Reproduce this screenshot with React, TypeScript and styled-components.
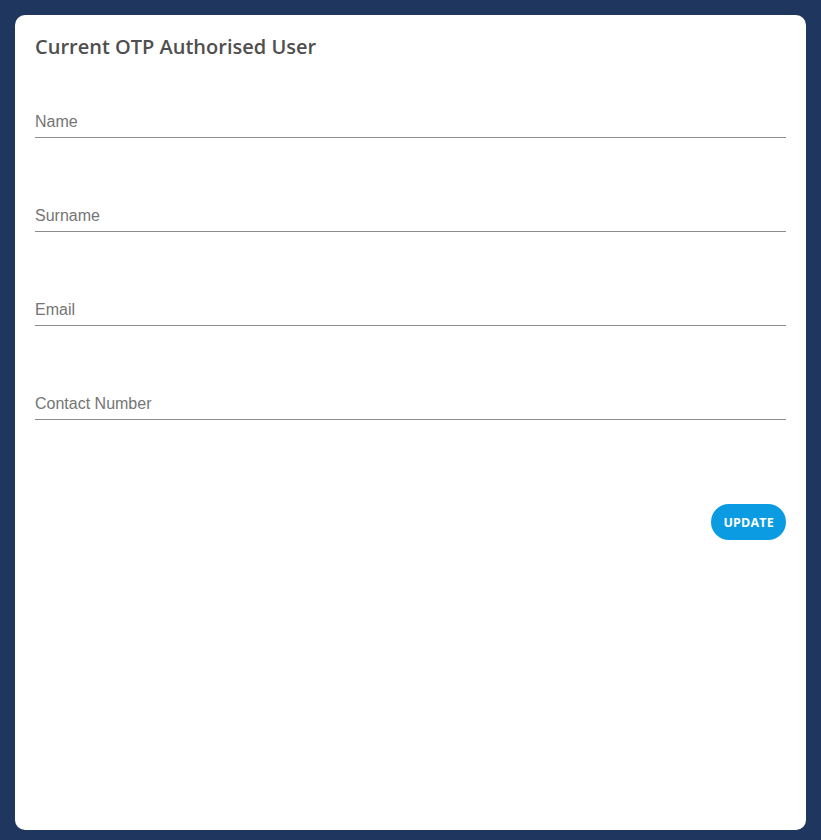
import { FC, useState } from "react";
import styled, { createGlobalStyle } from "styled-components";

const GlobalStyle = createGlobalStyle`
  html, body {
    margin: 0;
    padding: 0;
    background: #1f365f;
  }
  * {
    box-sizing: border-box;
  }
`;

const fields = ["Name", "Surname", "Email", "Contact Number"];

const App: FC = () => {
  const [values, setValues] = useState<Record<string, string>>({});

  return (
    <Page>
      <GlobalStyle />
      <Card>
        <Title>Current OTP Authorised User</Title>
        <FieldList>
          {fields.map((label) => (
            <Field key={label}>
              <Input
                placeholder={label}
                value={values[label] || ""}
                onChange={(e) =>
                  setValues({ ...values, [label]: e.target.value })
                }
              />
            </Field>
          ))}
        </FieldList>
        <Actions>
          <UpdateButton>UPDATE</UpdateButton>
        </Actions>
      </Card>
    </Page>
  );
};

const Page = styled.div`
  padding: 15px 15px 10px;
  background: #1f365f;
  min-height: 840px;
`;

const Card = styled.div`
  background: #ffffff;
  border-radius: 10px;
  height: 815px;
  padding: 20px;
  display: flex;
  flex-direction: column;
`;

const Title = styled.h2`
  margin: 0;
  font-family: "Open Sans", sans-serif;
  font-weight: 600;
  font-size: 20px;
  line-height: 24px;
  color: #4f4f4f;
`;

const FieldList = styled.div`
  margin-top: 46px;
  display: flex;
  flex-direction: column;
  gap: 61px;
`;

const Field = styled.div`
  border-bottom: 1px solid #8c8c8c;
`;

const Input = styled.input`
  display: block;
  width: 100%;
  border: none;
  outline: none;
  background: transparent;
  padding: 7px 0 6px;
  font-family: "Liberation Sans", Arial, sans-serif;
  font-size: 16px;
  line-height: 19px;
  height: 32px;
  color: #333;

  &::placeholder {
    color: #757575;
    opacity: 1;
  }
`;

const Actions = styled.div`
  margin-top: 84px;
  display: flex;
  justify-content: flex-end;
`;

const UpdateButton = styled.button`
  height: 36px;
  padding: 0 12px;
  border: none;
  border-radius: 18px;
  background: #0a9be3;
  color: #ffffff;
  font-family: "Open Sans", sans-serif;
  font-weight: 700;
  font-size: 12.5px;
  letter-spacing: 0.2px;
  cursor: pointer;
`;

export default App;
